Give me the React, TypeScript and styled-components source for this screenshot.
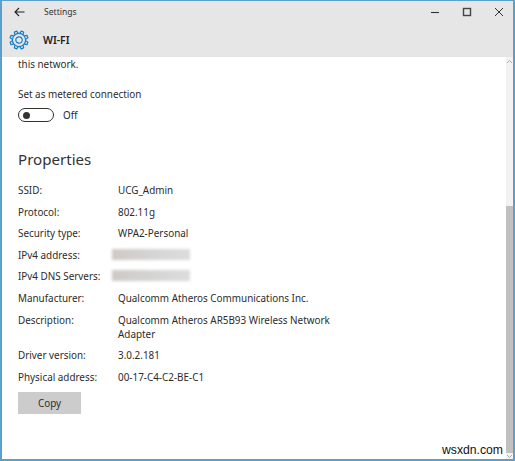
import React from "react";
import styled, { createGlobalStyle } from "styled-components";

const Global = createGlobalStyle`
  html, body { margin: 0; padding: 0; background: #fff; }
  body { font-family: "Noto Sans", "Open Sans", "Liberation Sans", sans-serif; color: #2b2b2b; }
`;
const Window = styled.div`
  position: relative; width: 515px; height: 461px; box-sizing: border-box;
  border: 1px solid #5b9fcb; border-left-width: 2px; border-right-width: 2px; border-bottom-width: 2px;
  display: flex; flex-direction: column; overflow: hidden; background: #fff;
`;
const Header = styled.header`
  background: #e6e6e6; height: 56px; flex: none; display: flex; flex-direction: column;
`;
const TitleBar = styled.div`
  height: 22px; display: flex; align-items: center; padding-left: 12px;
`;
const Back = styled.svg`width: 11px; height: 10px; flex: none;`;
const AppName = styled.span`font-size: 8.6px; margin-left: 19px; color: #333; flex: 1;`;
const WinButton = styled.svg`width: 10px; height: 10px; flex: none; margin-right: 22px; &:last-child { margin-right: 9px; }`;
const Heading = styled.div`display: flex; align-items: center; padding-left: 7px; height: 34px;`;
const Gear = styled.svg`width: 20px; height: 20px; flex: none;`;
const Title = styled.h1`font-size: 10.4px; font-weight: 600; margin: 0 0 0 14px; color: #222;`;
const Body = styled.div`flex: 1; display: flex; min-height: 0;`;
const Content = styled.main`
  flex: 1; padding: 0 0 0 16px; font-size: 9.9px; line-height: 14px; display: flex; flex-direction: column;
`;
const Para = styled.div`margin-top: ${(p: { $top: number }) => p.$top}px;`;
const ToggleRow = styled.div`display: flex; align-items: center; margin-top: 7px;`;
const Track = styled.div`
  width: 30px; height: 12px; border: 1.6px solid #333; border-radius: 8px; display: flex; align-items: center; padding-left: 4px;
`;
const Knob = styled.div`width: 7px; height: 7px; border-radius: 50%; background: #333;`;
const ToggleLabel = styled.span`margin-left: 9px;`;
const SectionTitle = styled.h2`font-size: 15.1px; font-weight: 400; margin: 27px 0 14px; line-height: 20px; color: #333;`;
const Grid = styled.div`display: grid; grid-template-columns: 100px 222px; row-gap: 7.6px;`;
const Label = styled.div``;
const Value = styled.div``;
const Blurred = styled.div`
  width: 78px; height: 11px; margin: 1px 0 0 -6px; filter: blur(1.5px);
  background: linear-gradient(90deg, #cfc9c4, #d6d6d6 60%, #dcdcdc);
`;
const CopyButton = styled.button`
  width: 63px; height: 22px; margin-top: 8px; border: 0; background: #cccccc; font: inherit; color: #2b2b2b; padding: 0;
`;
const Scrollbar = styled.aside`
  width: 7px; flex: none; background: #f2f2f2; display: flex; flex-direction: column; align-items: center; justify-content: space-between;
`;
const Arrow = styled.svg`width: 7px; height: 5px; margin: 2px 0 0; flex: none;`;
const Thumb = styled.div`width: 7px; height: 247px; background: #c1c1c1; margin-top: auto; margin-bottom: -1px;`;
const Watermark = styled.span`
  position: absolute; right: 10px; bottom: 2px; font-family: "Liberation Sans", sans-serif; font-size: 12.2px; color: #111; background: #fff; line-height: 14px;
`;

const rows: [string, string][] = [
  ["SSID:", "UCG_Admin"],
  ["Protocol:", "802.11g"],
  ["Security type:", "WPA2-Personal"],
  ["IPv4 address:", ""],
  ["IPv4 DNS Servers:", ""],
  ["Manufacturer:", "Qualcomm Atheros Communications Inc."],
  ["Description:", "Qualcomm Atheros AR5B93 Wireless Network Adapter"],
  ["Driver version:", "3.0.2.181"],
  ["Physical address:", "00-17-C4-C2-BE-C1"],
];

const teeth = Array.from({ length: 8 }, (_, i) => i * 45);

export default function App() {
  return (
    <Window>
      <Global />
      <Header>
        <TitleBar>
          <Back viewBox="0 0 11 10"><path d="M10.5 5H1M5 1 1 5l4 4" fill="none" stroke="#222" strokeWidth="1.1" /></Back>
          <AppName>Settings</AppName>
          <WinButton viewBox="0 0 10 10"><path d="M1 5.5H9" stroke="#333" strokeWidth="1.1" /></WinButton>
          <WinButton viewBox="0 0 10 10"><rect x="1.5" y="1.5" width="7" height="7" fill="none" stroke="#444" strokeWidth="1.4" /></WinButton>
          <WinButton viewBox="0 0 10 10"><path d="M1 1 9 9M9 1 1 9" stroke="#333" strokeWidth="1" /></WinButton>
        </TitleBar>
        <Heading>
          <Gear viewBox="0 0 20 20">
            <g fill="none" stroke="#1b7fc9" strokeWidth="1.2">
              <circle cx="10" cy="10" r="3.2" />
              <circle cx="10" cy="10" r="6.6" />
              {teeth.map((a) => (
                <path key={a} d="M8.2 3.6 8.7 0.9H11.3L11.8 3.6" transform={`rotate(${a + 22.5} 10 10)`} strokeLinejoin="round" />
              ))}
            </g>
          </Gear>
          <Title>WI-FI</Title>
        </Heading>
      </Header>
      <Body>
        <Content>
          <Para $top={0}>this network.</Para>
          <Para $top={16}>Set as metered connection</Para>
          <ToggleRow>
            <Track><Knob /></Track>
            <ToggleLabel>Off</ToggleLabel>
          </ToggleRow>
          <SectionTitle>Properties</SectionTitle>
          <Grid>
            {rows.map(([k, v]) => (
              <React.Fragment key={k}>
                <Label>{k}</Label>
                {v ? <Value>{v}</Value> : <Blurred />}
              </React.Fragment>
            ))}
          </Grid>
          <CopyButton>Copy</CopyButton>
        </Content>
        <Scrollbar>
          <Arrow viewBox="0 0 7 5"><path d="M1 4 3.5 1.5 6 4" fill="none" stroke="#aaa" /></Arrow>
          <Thumb />
          <Arrow viewBox="0 0 7 5"><path d="M1 1 3.5 3.5 6 1" fill="none" stroke="#aaa" /></Arrow>
        </Scrollbar>
      </Body>
      <Watermark>wsxdn.com</Watermark>
    </Window>
  );
}
